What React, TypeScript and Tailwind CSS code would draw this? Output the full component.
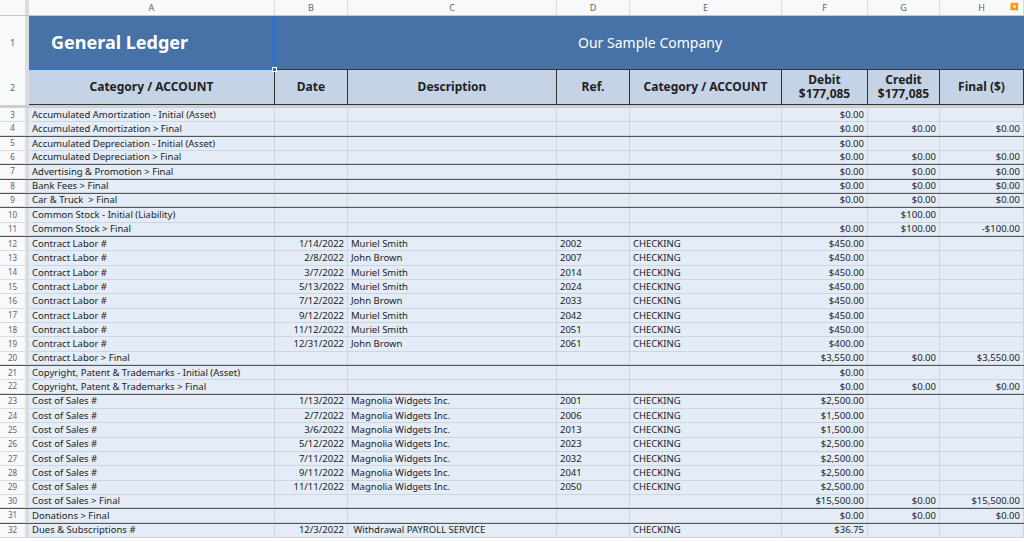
const COLS = [
  { k: 'A', w: 246 },
  { k: 'B', w: 73 },
  { k: 'C', w: 209 },
  { k: 'D', w: 73 },
  { k: 'E', w: 152 },
  { k: 'F', w: 86 },
  { k: 'G', w: 72 },
  { k: 'H', w: 84 },
]

type Row = [string, string, string, string, string, string, string, string, boolean?]

const rows: Row[] = [
  ['Accumulated Amortization - Initial (Asset)', '', '', '', '', '$0.00', '', ''],
  ['Accumulated Amortization > Final', '', '', '', '', '$0.00', '$0.00', '$0.00', true],
  ['Accumulated Depreciation - Initial (Asset)', '', '', '', '', '$0.00', '', ''],
  ['Accumulated Depreciation > Final', '', '', '', '', '$0.00', '$0.00', '$0.00', true],
  ['Advertising & Promotion > Final', '', '', '', '', '$0.00', '$0.00', '$0.00', true],
  ['Bank Fees > Final', '', '', '', '', '$0.00', '$0.00', '$0.00', true],
  ['Car & Truck  > Final', '', '', '', '', '$0.00', '$0.00', '$0.00', true],
  ['Common Stock - Initial (Liability)', '', '', '', '', '', '$100.00', ''],
  ['Common Stock > Final', '', '', '', '', '$0.00', '$100.00', '-$100.00', true],
  ['Contract Labor #', '1/14/2022', 'Muriel Smith', '2002', 'CHECKING', '$450.00', '', ''],
  ['Contract Labor #', '2/8/2022', 'John Brown', '2007', 'CHECKING', '$450.00', '', ''],
  ['Contract Labor #', '3/7/2022', 'Muriel Smith', '2014', 'CHECKING', '$450.00', '', ''],
  ['Contract Labor #', '5/13/2022', 'Muriel Smith', '2024', 'CHECKING', '$450.00', '', ''],
  ['Contract Labor #', '7/12/2022', 'John Brown', '2033', 'CHECKING', '$450.00', '', ''],
  ['Contract Labor #', '9/12/2022', 'Muriel Smith', '2042', 'CHECKING', '$450.00', '', ''],
  ['Contract Labor #', '11/12/2022', 'Muriel Smith', '2051', 'CHECKING', '$450.00', '', ''],
  ['Contract Labor #', '12/31/2022', 'John Brown', '2061', 'CHECKING', '$400.00', '', ''],
  ['Contract Labor > Final', '', '', '', '', '$3,550.00', '$0.00', '$3,550.00', true],
  ['Copyright, Patent & Trademarks - Initial (Asset)', '', '', '', '', '$0.00', '', ''],
  ['Copyright, Patent & Trademarks > Final', '', '', '', '', '$0.00', '$0.00', '$0.00', true],
  ['Cost of Sales #', '1/13/2022', 'Magnolia Widgets Inc.', '2001', 'CHECKING', '$2,500.00', '', ''],
  ['Cost of Sales #', '2/7/2022', 'Magnolia Widgets Inc.', '2006', 'CHECKING', '$1,500.00', '', ''],
  ['Cost of Sales #', '3/6/2022', 'Magnolia Widgets Inc.', '2013', 'CHECKING', '$1,500.00', '', ''],
  ['Cost of Sales #', '5/12/2022', 'Magnolia Widgets Inc.', '2023', 'CHECKING', '$2,500.00', '', ''],
  ['Cost of Sales #', '7/11/2022', 'Magnolia Widgets Inc.', '2032', 'CHECKING', '$2,500.00', '', ''],
  ['Cost of Sales #', '9/11/2022', 'Magnolia Widgets Inc.', '2041', 'CHECKING', '$2,500.00', '', ''],
  ['Cost of Sales #', '11/11/2022', 'Magnolia Widgets Inc.', '2050', 'CHECKING', '$2,500.00', '', ''],
  ['Cost of Sales > Final', '', '', '', '', '$15,500.00', '$0.00', '$15,500.00', true],
  ['Donations > Final', '', '', '', '', '$0.00', '$0.00', '$0.00', true],
  ['Dues & Subscriptions #', '12/3/2022', ' Withdrawal PAYROLL SERVICE', '', 'CHECKING', '$36.75', '', ''],
]

const rightCols = new Set([1, 5, 6, 7])

export default function App() {
  return (
    <div className="w-[1024px] h-[542px] overflow-hidden bg-white text-[#222] font-['Liberation_Sans',Arial,sans-serif]">
      {/* column letters */}
      <div className="flex h-[16px] bg-[#f8f9fa] border-b border-[#c4c7c5] text-[9px] text-[#5f6368]">
        <div className="w-[29px] shrink-0 border-r-4 border-[#dadce0]" />
        {COLS.map((c) => (
          <div key={c.k} style={{ width: c.w }} className="shrink-0 flex items-center justify-center border-r border-[#dadce0] relative">
            {c.k}
            {c.k === 'H' && <span className="absolute right-1 text-[7px]">◀</span>}
          </div>
        ))}
      </div>

      {/* row 1 title */}
      <div className="flex h-[54px]">
        <div className="w-[29px] shrink-0 bg-[#f8f9fa] border-r-4 border-[#dadce0] text-[9px] text-[#5f6368] flex items-center justify-center">1</div>
        <div className="w-[246px] shrink-0 bg-[#4672a8] flex items-center pl-[22px] text-white font-bold text-[18px] border-r border-b border-[#1a73e8] relative">
          General Ledger
          <span className="absolute -right-[3px] -bottom-[3px] w-[5px] h-[5px] bg-[#1a73e8] border border-white" />
        </div>
        <div className="flex-1 bg-[#4672a8] flex items-center text-white text-[14px] pl-[303px] border-b border-[#333]">Our Sample Company</div>
      </div>

      {/* row 2 headers */}
      <div className="flex h-[38px] border-b-[3px] border-[#cfcfcf]">
        <div className="w-[29px] shrink-0 bg-[#f8f9fa] border-r-4 border-[#dadce0] text-[9px] text-[#5f6368] flex items-center justify-center">2</div>
        {[
          'Category / ACCOUNT',
          'Date',
          'Description',
          'Ref.',
          'Category / ACCOUNT',
          'Debit\n$177,085',
          'Credit\n$177,085',
          'Final ($)',
        ].map((t, i) => (
          <div
            key={i}
            style={{ width: COLS[i].w }}
            className="shrink-0 bg-[#c5d3e6] border-r border-b border-[#333] flex items-center justify-center text-center font-bold text-[12px] leading-[14px] whitespace-pre"
          >
            {t}
          </div>
        ))}
      </div>

      {rows.map((r, idx) => {
        const final = r[8]
        return (
          <div key={idx} className={`flex h-[14.33px] ${final ? 'border-b-[1.5px] border-[#555]' : ''}`}>
            <div className="w-[29px] shrink-0 bg-[#f8f9fa] border-r-4 border-b border-[#dadce0] text-[8px] text-[#5f6368] flex items-center justify-center">
              {idx + 3}
            </div>
            {COLS.map((c, i) => (
              <div
                key={c.k}
                style={{ width: c.w }}
                className={`shrink-0 bg-[#e4ecf7] border-r border-b border-[#cdd5e0] text-[9.5px] leading-none flex items-center px-[3px] whitespace-pre overflow-hidden ${rightCols.has(i) ? 'justify-end' : ''}`}
              >
                {r[i]}
              </div>
            ))}
          </div>
        )
      })}
    </div>
  )
}
